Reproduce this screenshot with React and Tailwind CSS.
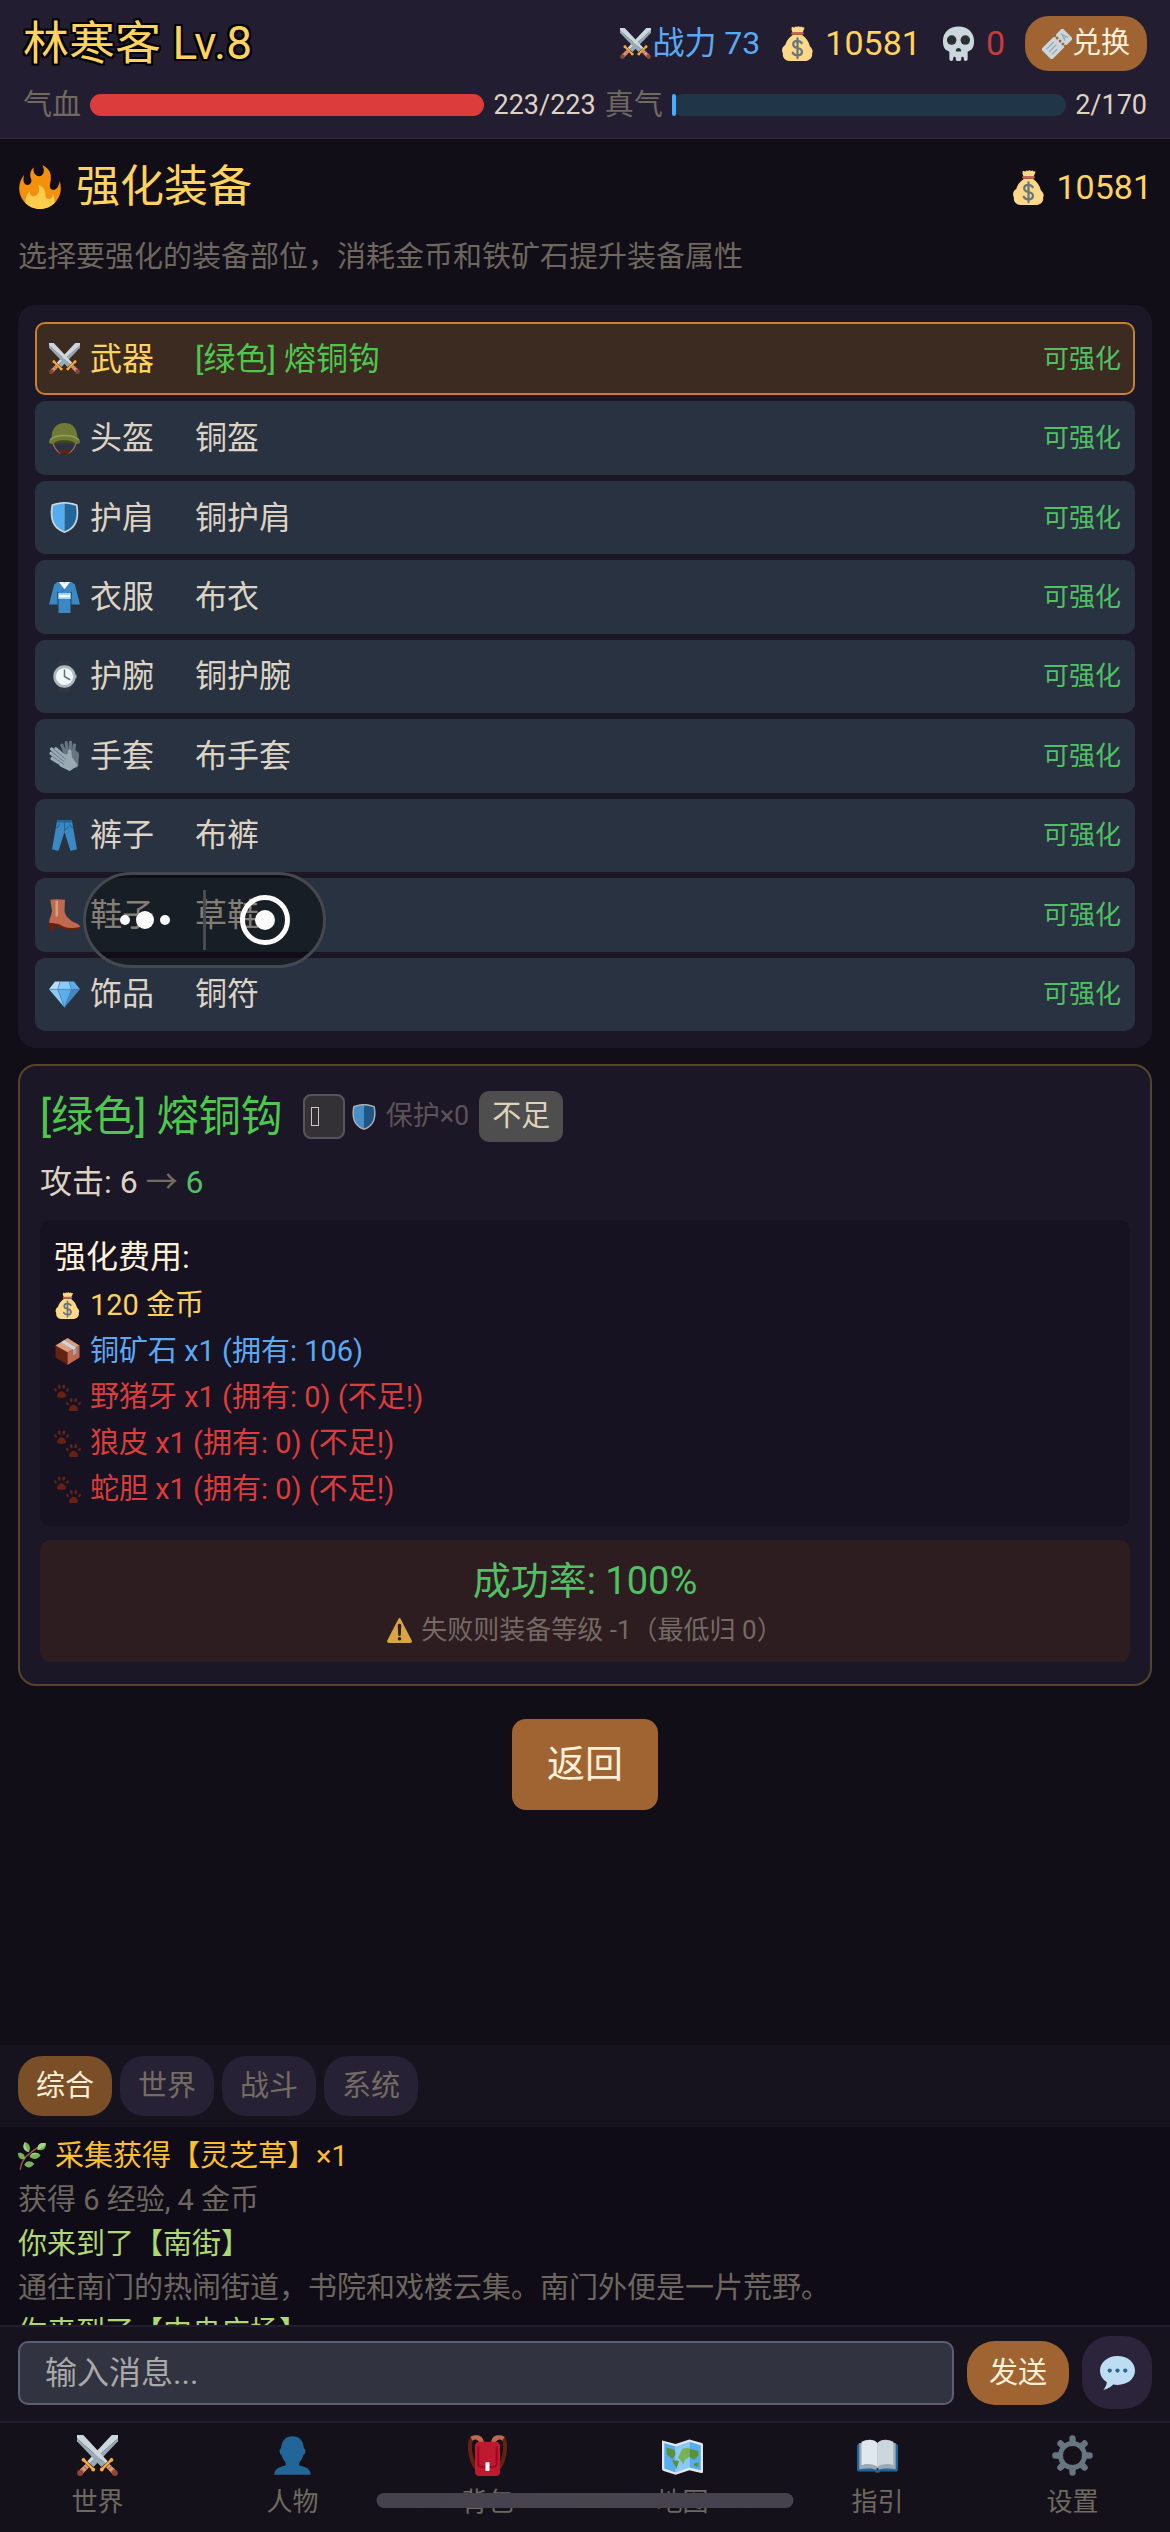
import React from "react";

function Svg({ className, children }) {
  return (
    <svg viewBox="0 0 36 36" className={"shrink-0 " + className} aria-hidden="true">
      {children}
    </svg>
  );
}

function Sword() {
  return (
    <>
      <path fill="#CCD6DD" d="M0 0h5.500L27 23l-2 2L0 3z" />
      <path fill="#99AAB5" d="M0 3l25 22-3.500 3L0 5.500z" />
      <path stroke="#D99E82" strokeWidth="4.200" d="M27 27l5.500 5.500" />
      <path stroke="#BF6952" strokeWidth="1.200" d="M27.300 30.300l3-3M29.800 32.600l3-3" />
      <path stroke="#FFAC33" strokeWidth="2.200" strokeLinecap="round" d="M21.800 30.200l8.400-8.400" />
      <circle cx="21.800" cy="30.300" r="1.700" fill="#FFAC33" />
      <circle cx="30.300" cy="21.800" r="1.700" fill="#FFAC33" />
      <circle cx="33.300" cy="33.300" r="2.600" fill="#8A4633" />
    </>
  );
}

function Swords({ className }) {
  return (
    <Svg className={className}>
      <g transform="matrix(-1 0 0 1 36 0)"><Sword /></g>
      <Sword />
    </Svg>
  );
}

function MoneyBag({ className }) {
  return (
    <Svg className={className}>
      <path fill="#FDD888" d="M13.500 7.500C12 5 11.500 3.500 12 1.500c1-.9 2 .1 2.600.3.800-1.200 2-1.800 2.900-.6 1-1.500 2.400-.9 3 .2 1.200-1.300 2.300-.8 2.900.3 1-.7 1.900-.7 1.700.4-.5 2.300-1.600 4-2.600 5.400z" />
      <path fill="#FDD888" d="M22.500 9c4.500 3.200 7.200 7.500 8.200 11.800 2.600 2.500 3.700 5.200 2.300 7.500.8 3.700-2.300 7.200-6.500 7.700H9.500C5.300 35.700 2.200 32.200 3 28.300 1.300 25 2.100 21.500 5.400 19.500 6.400 15.800 9 12 13.500 9z" />
      <path fill="#BF6952" d="M13 6.200h10a1.400 1.400 0 010 2.800H13a1.400 1.400 0 010-2.800z" />
      <path fill="none" stroke="#67757F" strokeWidth="2.300" strokeLinecap="round" d="M22.400 17.600c-1-1.600-2.600-2.200-4.400-2.200-2.600 0-4.400 1.400-4.400 3.500 0 2.400 2 3.100 4.400 3.700 2.600.6 4.600 1.400 4.600 3.900 0 2.300-2 3.700-4.600 3.700-2.200 0-4-.9-4.900-2.700M18 12.600v20.400" />
    </Svg>
  );
}

function Skull({ className }) {
  return (
    <Svg className={className}>
      <path fill="#CCD6DD" d="M18 .500C8.500 .500 2 6.800 2 15.200c0 3.600.5 6.600 2.300 8.600.9 1.200 3.200 1.600 4.300 2.600v7.600a2 2 0 004 0v-1a1.300 1.300 0 012.600 0v1.500a1.500 1.500 0 001.500 1.500h2.600a1.500 1.500 0 001.500-1.500V33a1.300 1.300 0 012.600 0v1a2 2 0 004 0v-7.600c1.100-1 3.400-1.400 4.300-2.600 1.800-2 2.300-5 2.300-8.600C34 6.800 27.500 .500 18 .500z" />
      <circle cx="11" cy="14.500" r="4.900" fill="#292F33" />
      <circle cx="25" cy="14.500" r="4.900" fill="#292F33" />
      <path fill="#292F33" d="M15.200 25.500c0-1.700 1.300-3 2.800-3s2.800 1.300 2.800 3c0 1.100-1.500.6-2.800.6s-2.800.500-2.800-.6z" />
    </Svg>
  );
}

function Ticket({ className }) {
  return (
    <Svg className={className}>
      <g transform="rotate(-45 18 18)">
        <path fill="#CCD6DD" d="M2 9h19.500a1.700 1.700 0 003.400 0H34c1.400 0 2 .6 2 2v14c0 1.400-.6 2-2 2h-9.100a1.700 1.700 0 00-3.400 0H2c-1.400 0-2-.6-2-2V11c0-1.400.6-2 2-2z" />
        <path stroke="#99AAB5" strokeWidth="1.500" d="M4.500 13.500H17M4.500 18H17M4.500 22.500H14" />
        <g fill="#A06433">
          <circle cx="23.200" cy="13" r="1.700" />
          <circle cx="23.200" cy="18" r="1.700" />
          <circle cx="23.200" cy="23" r="1.700" />
        </g>
        <path fill="none" stroke="#99AAB5" strokeWidth="1.500" d="M27.500 22l2.800-8 2.800 8M28.300 19.300h4" />
      </g>
    </Svg>
  );
}

function Fire({ className }) {
  return (
    <Svg className={className}>
      <path fill="#F4900C" d="M35 19c0-2.062-.367-4.039-1.040-5.868-.46 5.389-3.333 8.157-6.335 6.868-2.812-1.208-.917-5.917-.777-8.164.236-3.809-.012-8.169-6.931-11.794 2.875 5.500.333 8.917-2.333 9.125-2.958.231-5.667-2.542-4.667-7.042-3.238 2.386-3.332 6.402-2.333 9 1.042 2.708-.042 4.958-2.583 5.208-2.840.280-4.418-3.041-2.963-8.333C2.520 10.965 1 14.805 1 19c0 9.389 7.611 17 17 17s17-7.611 17-17z" />
      <path fill="#FFCC4D" d="M28.394 23.999c.148 3.084-2.561 4.293-4.019 3.709-2.106-.843-1.541-2.291-2.083-5.291s-2.625-5.083-5.708-6c2.250 6.333-1.247 8.667-3.080 9.084-1.872.426-3.753-.001-3.968-4.007C7.352 23.668 6 26.676 6 30c0 .368.023.73.055 1.090C9.125 34.124 13.342 36 18 36s8.875-1.876 11.945-4.910c.032-.36.055-.722.055-1.090 0-2.187-.584-4.236-1.606-6.001z" />
    </Svg>
  );
}

function Shield({ className }) {
  return (
    <Svg className={className}>
      <path fill="#CCD6DD" d="M33 3c-7-3-15-3-15-3S10 0 3 3C0 18 3 31 18 36c15-5 18-18 15-33z" />
      <path fill="#55ACEE" d="M18 33.884C6.412 29.729 1.961 19.831 4.760 4.444 11.063 2.029 17.928 2 18 2z" />
      <path fill="#269" d="M31.240 4.443C25.001 2.023 18.227 2 18 2v31.884c11.588-4.156 16.040-14.054 13.240-29.441z" />
    </Svg>
  );
}

function Helmet({ className }) {
  return (
    <Svg className={className}>
      <path fill="none" stroke="#C1694F" strokeWidth="1.300" d="M4.500 20c0 7 4 13 9 15M31.500 20c0 7-4 13-9 15" />
      <path fill="#662113" d="M10.500 32.500c4.500-1.600 10.500-1.600 15 0-1.500 2-4 3.500-7.500 3.500s-6-1.500-7.500-3.500z" />
      <path fill="#3E4720" d="M4 20h28l-1.500 4.500c-8-1.200-17-1.200-25 0z" />
      <path fill="#6F7A37" d="M18 0C8.500 0 3 7 3 17c-1.500 1-3 2.500-3 4.500C0 24 2.500 25 5.500 24c1-2.500 5.500-4 12.500-4s11.500 1.500 12.500 4c3 1 5.500 0 5.500-2.500 0-2-1.500-3.500-3-4.500C33 7 27.500 0 18 0z" />
      <path fill="none" stroke="#95A04D" strokeWidth="1.600" d="M1.500 19.500c4-3.700 9.500-5 16.500-5s12.500 1.300 16.500 5" />
    </Svg>
  );
}

function Kimono({ className }) {
  return (
    <Svg className={className}>
      <path fill="#3B88C3" d="M10 0L6 3 0 26h9.500V12h17v14H36L30 3l-4-3z" />
      <path fill="#3B88C3" d="M9 0h18l-2 10v26H11V10z" />
      <path fill="#269" d="M9.500 8L11 26H9zM26.500 8L25 26h2z" />
      <path fill="#F5F8FA" d="M11.500 0L18 8.500 24.500 0z" />
      <path fill="#BDDDF4" d="M15.500 0h5L18 2.500z" />
      <path stroke="#269" strokeWidth="1" d="M18 9l-4 3" />
      <path fill="#F5F8FA" d="M11 13h14v6.500H11z" />
      <path fill="#88C9F9" d="M11 13h14v1.700H11zM11 18h14v1.500H11z" />
    </Svg>
  );
}

function Watch({ className }) {
  return (
    <Svg className={className}>
      <path fill="#31373D" d="M13 0h10c1.400 0 2 1.500 2 3v30c0 1.500-.6 3-2 3H13c-1.400 0-2-1.500-2-3V3c0-1.500.6-3 2-3z" />
      <path fill="#99AAB5" d="M29 16h3v4h-3z" />
      <circle cx="18" cy="18" r="13" fill="#AAB8C2" />
      <circle cx="18" cy="18" r="10" fill="#F5F8FA" />
      <path fill="none" stroke="#66757F" strokeWidth="1.800" strokeLinecap="round" d="M18 10.500V18l6 3.500" />
    </Svg>
  );
}

function Gloves({ className }) {
  return (
    <Svg className={className}>
      <g stroke="#66757F" strokeWidth="3.800" strokeLinecap="round" strokeLinejoin="round">
        <path fill="none" d="M15 6l4 10M20 3l1.500 12M25 2.500L25 16M29.500 6L28 18" />
        <path fill="#66757F" d="M18 13h11l4 3-1 14-5 1z" />
      </g>
      <g stroke="#99AAB5" strokeWidth="3.800" strokeLinecap="round" strokeLinejoin="round">
        <path fill="none" d="M8 10l11 10M3 10.500l14 12M2.500 15.500l14 11M3.500 21.500l13 8" />
        <path fill="#99AAB5" d="M16 19l7-1 1-5 1 8 6 8-7 5-10-5z" />
      </g>
      <path stroke="#66757F" strokeWidth="1" fill="none" d="M5.500 10.500l14 12M4 14.500l14 11M4.500 19.500l13 9" />
    </Svg>
  );
}

function Jeans({ className }) {
  return (
    <Svg className={className}>
      <path fill="#3B88C3" d="M9.500 0h17l6 34-7.500 2-7-22-7 22-7.500-2z" />
      <path fill="#269" d="M9.500 0h17l.5 3H9z" />
      <path fill="none" stroke="#269" strokeWidth="1.200" d="M18 2v11M18 11c2 0 4-1 4-4M8 9c2 0 3.500-1.500 4-5M28 9c-2 0-3.500-1.500-4-5" />
    </Svg>
  );
}

function Boot({ className }) {
  return (
    <Svg className={className}>
      <path fill="#662113" d="M0 27h8l28 5v2c0 1.500-1 2-3 2-7 .5-14 .5-19-2l-7-2v4H0z" />
      <path fill="#C1694F" d="M1.500.8C7 0 13 0 18.500.8L18 14c1 6 5 9 9 12 3 2 9 2.500 9 6.500C27 34.500 19 34 13 30c-4-2-9-1-12.500-2C-.5 23 3 20 3.500 14z" />
      <path fill="#D99E82" d="M7.500 2h3v17c0 1-1 1.500-1.500 1.500S7.500 20 7.500 19z" />
    </Svg>
  );
}

function Gem({ className }) {
  return (
    <Svg className={className}>
      <path fill="#BDDDF4" d="M13 3H7l-7 9h10z" />
      <path fill="#5DADEC" d="M36 12l-7-9h-6l3 9z" />
      <path fill="#4289C1" d="M26 12h10L18 33z" />
      <path fill="#8CCAF7" d="M10 12H0l18 21zm3-9l-3 9h16l-3-9z" />
      <path fill="#5DADEC" d="M18 33l-8-21h16z" />
      <path fill="none" stroke="#4289C1" strokeWidth=".7" d="M0 12h36M10 12l8 21 8-21-3-9M10 12l3-9" />
    </Svg>
  );
}

function Crate({ className }) {
  return (
    <Svg className={className}>
      <path fill="#662113" d="M2 10l16 9v17L2 26z" />
      <path fill="#C1694F" d="M34 10l-16 9v17l16-10z" />
      <path fill="#D99E82" d="M18 0l16 10-16 9L2 10z" />
      <path fill="#CCD6DD" d="M13.500 3L29.500 13v7L26 22.500v-7L9.500 5.500z" />
      <path fill="#99AAB5" d="M26 15.300L29.500 13v7L26 22.500z" />
    </Svg>
  );
}

function Paw({ x, y }) {
  return (
    <g transform={`translate(${x} ${y})`} fill="#662113">
      <path d="M10 9.500c3 0 6 3.500 6 6.500 0 1.500-1 2.500-6 2.500S4 17.500 4 16c0-3 3-6.500 6-6.500z" />
      <ellipse cx="7" cy="3.500" rx="1.900" ry="3" transform="rotate(-10 7 3.500)" />
      <ellipse cx="13" cy="3.500" rx="1.900" ry="3" transform="rotate(10 13 3.500)" />
      <ellipse cx="2" cy="8" rx="1.600" ry="2.500" transform="rotate(-30 2 8)" />
      <ellipse cx="18" cy="8" rx="1.600" ry="2.500" transform="rotate(30 18 8)" />
    </g>
  );
}

function Paws({ className }) {
  return (
    <Svg className={className}>
      <Paw x={0} y={0} />
      <Paw x={16} y={18} />
    </Svg>
  );
}

function Warning({ className }) {
  return (
    <Svg className={className}>
      <path fill="#D9A441" d="M2.700 36C.8 36-.4 34.200.4 32.500L16.300 1.300c.9-1.700 2.500-1.700 3.400 0l15.900 31.200c.8 1.700-.4 3.500-2.300 3.500z" />
      <path fill="#2B1D1C" d="M15.500 10.500c0-3 5-3 5 0l-.6 13.500c0 2.400-3.800 2.400-3.800 0z" />
      <circle cx="18" cy="30" r="2.500" fill="#2B1D1C" />
    </Svg>
  );
}

function Herb({ className }) {
  return (
    <Svg className={className}>
      <path fill="none" stroke="#A0564A" strokeWidth="1.800" strokeLinecap="round" d="M3 35c1-9 6-16 13-21 4-3 8-6 11-8" />
      <g fill="#77B255">
        <path d="M9 0c6 2 8 7 5 13C7 11 5 6 9 0z" />
        <path d="M36 2c0 7-4 10-11 8 0-7 4-10 11-8z" />
        <path d="M0 14c6-1 9 2 9 8-6 1-9-2-9-8z" />
        <path d="M15 19c2-6 9-7 14-2-4 6-10 6-14 2z" />
        <path d="M8 29c3-5 8-6 13-1-4 6-10 6-13 1z" />
      </g>
      <g fill="#A6D388">
        <path d="M9 0c0 5 2 9 5 13C7 11 5 6 9 0z" />
        <path d="M36 2c-2 4-7 7-11 8 0-7 4-10 11-8z" />
        <path d="M15 19c2-6 9-7 14-2-4-2.500-10-2-14 2z" />
      </g>
    </Svg>
  );
}

function Person({ className }) {
  return (
    <Svg className={className}>
      <path fill="#269" d="M24 26.800v-2.600c1.800-2 3-4.200 3.500-6.600 1.400-.3 1.800-2.200 1.800-3.400 0-1-.2-2.200-1.300-2.400C27.700 4.800 24 1 18 1S8.300 4.800 8 11.800c-1.100.2-1.300 1.400-1.300 2.400 0 1.200.4 3.100 1.800 3.400.500 2.400 1.700 4.600 3.500 6.600v2.600C6.500 28 2 29.500 2 35h32c0-5.500-4.500-7-10-8.200z" />
    </Svg>
  );
}

function Backpack({ className }) {
  return (
    <Svg className={className}>
      <path fill="none" stroke="#662113" strokeWidth="3.500" d="M5 2C1 6 2 20 8 29M31 2c4 4 3 18-3 27" />
      <path fill="#C1694F" d="M3 1.500C9-1 14 0 15 7h-4C10 4 7 3 5 5zM33 1.500C27-1 22 0 21 7h4c1-3 4-4 6-2z" />
      <path fill="#BE1931" d="M11 6h14c2.500 0 4 1.500 4 4v22c0 3-1.500 4-4 4H11c-2.500 0-4-1-4-4V10c0-2.500 1.500-4 4-4z" />
      <path fill="none" stroke="#A0041E" strokeWidth="1.600" d="M10 10v15c0 2 1 3 3 3h10c2 0 3-1 3-3V10" />
      <rect x="16.200" y="24" width="3.600" height="7.500" rx=".5" fill="#F5F8FA" />
    </Svg>
  );
}

function WorldMap({ className }) {
  return (
    <Svg className={className}>
      <path fill="#E1E8ED" d="M1 5l11 3 12-4 11 3c.7.2 1 .7 1 1.500V32c0 1.200-.6 1.600-1.700 1.300L24 31l-12 4-10.500-3.500C.5 31.200 0 30.700 0 29.700V6c0-1 .3-1.200 1-1z" />
      <path fill="#55ACEE" d="M2 7l10 3v23L2 29.500zM24 6l10 3v22l-10-2.500z" />
      <path fill="#88C9F9" d="M12 10l12-4v22.500L12 33z" />
      <path fill="#5C913B" d="M4 11l7 2 1 4-3 4-5-4zM12 22l3 1-2 6-1 1zM9 21l3 2v5l-2-3zM24 12l8 2v4l-4 4-4-3zM28 25l4-1v4l-4-1z" />
      <path fill="#77B255" d="M18 12l6-1v8l-4 3-1 4-2-3-3-3z" />
    </Svg>
  );
}

function Book({ className }) {
  return (
    <Svg className={className}>
      <path fill="#269" d="M1 8l3-1v22h12l2 1 2-1h12V7l3 1c.6.500 1 1 1 2v20c0 1.500-.5 2-2 2H20.500c-1 1.500-4 1.500-5 0H2c-1.500 0-2-.5-2-2V10c0-1 .4-1.500 1-2z" />
      <path fill="#99AAB5" d="M2 7h32v23c-6-1-13-1-16 1-3-2-10-2-16-1z" />
      <path fill="#E1E8ED" d="M4 6c5-2.500 11-2.500 14 1v21c-4-3-10-3-14-1.500z" />
      <path fill="#CCD6DD" d="M32 6c-5-2.500-11-2.500-14 1v21c4-3 10-3 14-1.500z" />
      <circle cx="18" cy="30" r="1" fill="#292F33" />
    </Svg>
  );
}

function Gear({ className }) {
  return (
    <Svg className={className}>
      <g stroke="#66757F" strokeWidth="5.600" strokeLinecap="round">
        <path d="M18 3v5M18 28v5M3 18h5M28 18h5M7.400 7.400l3 3M25.600 25.600l3 3M28.600 7.400l-3 3M10.400 25.600l-3 3" />
      </g>
      <circle cx="18" cy="18" r="10.500" fill="none" stroke="#66757F" strokeWidth="4.500" />
      <circle cx="18" cy="18" r="8.300" fill="#15111B" />
    </Svg>
  );
}

function Speech({ className }) {
  return (
    <Svg className={className}>
      <path fill="#BDDDF4" d="M18 1C8 1 0 7.500 0 16c0 5 2.800 9.300 7 12 0 2-1.500 5.500-3.500 8 4-.8 8-3.200 10-5.600 1.500.3 3 .4 4.500.4 10 0 18-6 18-14.800S28 1 18 1z" />
      <g fill="#2A6797">
        <circle cx="10" cy="16" r="2.200" />
        <circle cx="18" cy="16" r="2.200" />
        <circle cx="26" cy="16" r="2.200" />
      </g>
    </Svg>
  );
}

const SLOTS = [
  { Icon: Swords, slot: "武器", name: "[绿色] 熔铜钩", active: true },
  { Icon: Helmet, slot: "头盔", name: "铜盔" },
  { Icon: Shield, slot: "护肩", name: "铜护肩" },
  { Icon: Kimono, slot: "衣服", name: "布衣" },
  { Icon: Watch, slot: "护腕", name: "铜护腕" },
  { Icon: Gloves, slot: "手套", name: "布手套" },
  { Icon: Jeans, slot: "裤子", name: "布裤" },
  { Icon: Boot, slot: "鞋子", name: "草鞋" },
  { Icon: Gem, slot: "饰品", name: "铜符" },
];

const COSTS = [
  { Icon: MoneyBag, text: "120 金币", color: "text-[#ffd05a]" },
  { Icon: Crate, text: "铜矿石 x1 (拥有: 106)", color: "text-[#5aa9f5]" },
  { Icon: Paws, text: "野猪牙 x1 (拥有: 0) (不足!)", color: "text-[#dc3c3c]" },
  { Icon: Paws, text: "狼皮 x1 (拥有: 0) (不足!)", color: "text-[#dc3c3c]" },
  { Icon: Paws, text: "蛇胆 x1 (拥有: 0) (不足!)", color: "text-[#dc3c3c]" },
];

const NAV = [
  { Icon: Swords, label: "世界" },
  { Icon: Person, label: "人物" },
  { Icon: Backpack, label: "背包" },
  { Icon: WorldMap, label: "地图" },
  { Icon: Book, label: "指引" },
  { Icon: Gear, label: "设置" },
];

function Meter({ label, value, track, fill, percent }) {
  return (
    <>
      <span className="text-[29px] text-[#6f6960]">{label}</span>
      <div className={"h-[22px] flex-1 rounded-[11px] " + track}>
        <div className={"h-full rounded-[11px] " + fill} style={{ width: percent + "%" }} />
      </div>
      <span className="text-[27px] text-[#dcd3c4]">{value}</span>
    </>
  );
}

function Header() {
  return (
    <header className="border-b-2 border-[#2b243b] bg-[#231d31] px-[23px] pt-4 pb-[10px]">
      <div className="flex items-center justify-between">
        <h1 className="text-[46px] leading-[55px] text-[#ffd35e] [text-shadow:2px_2px_0_#000,-2px_-2px_0_#000,2px_-2px_0_#000,-2px_2px_0_#000,0_2px_0_#000,0_-2px_0_#000,2px_0_0_#000,-2px_0_0_#000]">
          林寒客 Lv.8
        </h1>
        <div className="flex items-center gap-5 text-[34px] leading-[55px]">
          <span className="flex items-center gap-px text-[32px] text-[#5aa9f5]">
            <Swords className="size-[31px]" />
            战力 73
          </span>
          <span className="flex items-center gap-[10px] text-[#ffd35e]">
            <MoneyBag className="size-[35px]" />
            10581
          </span>
          <span className="flex items-center gap-[10px] text-[#c93a3e]">
            <Skull className="size-[35px]" />0
          </span>
          <button type="button" className="flex items-center rounded-[24px] bg-[#a06433] px-[17px] text-[29px] text-[#fff0d8]">
            <Ticket className="size-[30px]" />
            兑换
          </button>
        </div>
      </div>
      <div className="mt-3 flex items-center gap-[9px] leading-[44px]">
        <Meter label="气血" value="223/223" track="bg-[#4a2028]" fill="bg-[#dc3c3c]" percent={100} />
        <Meter label="真气" value="2/170" track="bg-[#203548]" fill="bg-[#4fabf7]" percent={1} />
      </div>
    </header>
  );
}

function SlotRow({ Icon, slot, name, active }) {
  return (
    <button
      type="button"
      aria-pressed={!!active}
      className={
        "flex items-center rounded-[10px] border-2 px-3 text-left text-[32px] leading-[48px] " +
        (active ? "border-[#c9812f] bg-[#3c2b20]" : "border-transparent bg-[#293240] text-[#dcd3c4]")
      }
    >
      <Icon className="size-[31px]" />
      <span className={"ml-[10px] w-[105px] " + (active ? "text-[#ffd35e]" : "")}>{slot}</span>
      <span className={"flex-1 " + (active ? "text-[#4ec74e]" : "")}>{name}</span>
      <span className="text-[26px] text-[#4fc163]">可强化</span>
    </button>
  );
}

function Detail() {
  return (
    <section className="mt-4 rounded-[18px] border-2 border-[#55432b] bg-[#1c1726] px-5 pt-[25px] pb-[22px]">
      <div className="flex items-center">
        <h3 className="text-[42px] leading-[51px] text-[#4ec74e]">[绿色] 熔铜钩</h3>
        <button type="button" aria-label="使用保护" className="ml-5 flex h-[45px] w-[42px] items-center rounded-lg border-2 border-[#57555b] bg-[#333136] pl-[6px]">
          <span className="h-[19px] w-[8px] border border-[#cfc7ba]" />
        </button>
        <Shield className="ml-[6px] size-[26px] opacity-80" />
        <span className="ml-[9px] text-[27px] text-[#5e5158]">保护×0</span>
        <button type="button" className="ml-[10px] rounded-[10px] bg-[#4f4e4f] px-[13px] text-[29px] leading-[51px] text-[#ddd3bb]">
          不足
        </button>
      </div>
      <p className="mt-[18px] text-[32px] leading-[44px] text-[#dcd3c4]">
        攻击: 6 <span className="text-[#746c63]">→</span> <span className="text-[#4fc163]">6</span>
      </p>
      <div className="mt-4 rounded-[10px] bg-[#161221] p-[14px]">
        <h4 className="mb-[2px] text-[32px] leading-[46px] text-[#fff0d8]">强化费用:</h4>
        <ul>
          {COSTS.map(({ Icon, text, color }) => (
            <li key={text} className={"flex items-center gap-[9px] text-[29px] leading-[46px] " + color}>
              <Icon className="size-[27px]" />
              {text}
            </li>
          ))}
        </ul>
      </div>
      <div className="mt-[14px] rounded-[10px] bg-[#2d1c20] pt-[14px] pb-[10px] text-center">
        <p className="text-[38px] leading-[54px] text-[#4fc163]">成功率: 100%</p>
        <p className="flex items-center justify-center gap-[9px] text-[26px] leading-[44px] text-[#746a63]">
          <Warning className="size-[25px]" />
          失败则装备等级 -1（最低归 0）
        </p>
      </div>
    </section>
  );
}

function Chat() {
  return (
    <section>
      <div className="flex gap-2 bg-[#17131e] px-[18px] py-[11px] text-[29px] leading-[60px]">
        <button type="button" className="rounded-[24px] bg-[#7a4f28] px-[18px] text-[#fff0d8]">综合</button>
        {["世界", "战斗", "系统"].map((tab) => (
          <button key={tab} type="button" className="rounded-[24px] bg-[#272135] px-[18px] text-[#746c63]">
            {tab}
          </button>
        ))}
      </div>
      <div className="h-[198px] overflow-hidden bg-[#100c17] px-[18px] pt-[7px] text-[29px] leading-[44px] text-[#6d675f]">
        <p className="flex items-center gap-[9px] text-[#fdbf2d]">
          <Herb className="size-[28px]" />
          采集获得【灵芝草】×1
        </p>
        <p>获得 6 经验, 4 金币</p>
        <p className="text-[#aed972]">你来到了【南街】</p>
        <p>通往南门的热闹街道，书院和戏楼云集。南门外便是一片荒野。</p>
        <p className="text-[#aed972]">你来到了【中央广场】</p>
      </div>
      <form className="flex items-center gap-[13px] border-t-2 border-[#231d30] bg-[#17131e] px-[18px] pt-[9px] pb-3" onSubmit={(e) => e.preventDefault()}>
        <input
          type="text"
          aria-label="输入消息"
          placeholder="输入消息..."
          className="h-[64px] min-w-0 flex-1 rounded-[10px] border-2 border-[#5d5d75] bg-[#313340] px-[25px] text-[32px] text-[#dcd3c4] outline-none placeholder:text-[#a9a9a9]"
        />
        <button type="submit" className="rounded-[28px] bg-[#a06433] px-[22px] text-[29px] leading-[64px] text-[#fff0d8]">发送</button>
        <button type="button" aria-label="聊天" className="flex h-[73px] w-[70px] items-center justify-center rounded-[28px] bg-[#2b243b]">
          <Speech className="size-[35px]" />
        </button>
      </form>
    </section>
  );
}

function FloatingCapsule() {
  return (
    <div className="absolute top-[872px] left-[83px] flex h-[96px] w-[243px] items-center rounded-full border-[3px] border-[#46484f] bg-black/40">
      <button type="button" aria-label="更多" className="flex flex-1 items-center justify-center gap-[6px]">
        <span className="size-[10px] rounded-full bg-white" />
        <span className="size-[18px] rounded-full bg-white" />
        <span className="size-[10px] rounded-full bg-white" />
      </button>
      <span className="h-[60px] w-[3px] bg-[#484b52]" />
      <button type="button" aria-label="关闭" className="flex flex-1 items-center justify-center">
        <span className="flex size-[50px] items-center justify-center rounded-full border-[5px] border-white">
          <span className="size-5 rounded-full bg-white" />
        </span>
      </button>
    </div>
  );
}

export default function App() {
  return (
    <div className="relative flex min-h-screen flex-col bg-[#120e18] font-['Roboto','Noto_Sans_CJK_SC',sans-serif]">
      <Header />
      <main className="flex flex-1 flex-col px-[18px] pt-4">
        <div className="flex items-center justify-between text-[#ffd35e]">
          <h2 className="flex items-center gap-[14px] text-[44px] leading-[64px]">
            <Fire className="size-[44px]" />
            强化装备
          </h2>
          <span className="flex items-center gap-[10px] text-[34px]">
            <MoneyBag className="size-[35px]" />
            10581
          </span>
        </div>
        <p className="mt-4 text-[29px] leading-[44px] text-[#6d675f]">选择要强化的装备部位，消耗金币和铁矿石提升装备属性</p>
        <section className="mt-[26px] grid min-h-[743px] auto-rows-fr gap-[6px] rounded-[18px] bg-[#1c1726] p-[17px]">
          {SLOTS.map((s) => (
            <SlotRow key={s.slot} {...s} />
          ))}
        </section>
        <Detail />
        <button type="button" className="mt-[33px] self-center rounded-[14px] bg-[#a06433] px-[35px] text-[38px] leading-[91px] text-[#fff0d8]">
          返回
        </button>
      </main>
      <Chat />
      <nav className="grid grid-cols-6 border-t-2 border-[#231d30] bg-[#15111b] pt-3 pb-3">
        {NAV.map(({ Icon, label }) => (
          <a key={label} href="#" className="flex flex-col items-center gap-2 text-[26px] leading-9 text-[#6f6960]">
            <Icon className="size-[41px]" />
            {label}
          </a>
        ))}
      </nav>
      <div className="pointer-events-none absolute bottom-6 left-1/2 h-[15px] w-[417px] -translate-x-1/2 rounded-full bg-linear-to-r from-[#46424d] from-10% via-[#48444e] to-[#46424d] to-90%" />
      <FloatingCapsule />
    </div>
  );
}
